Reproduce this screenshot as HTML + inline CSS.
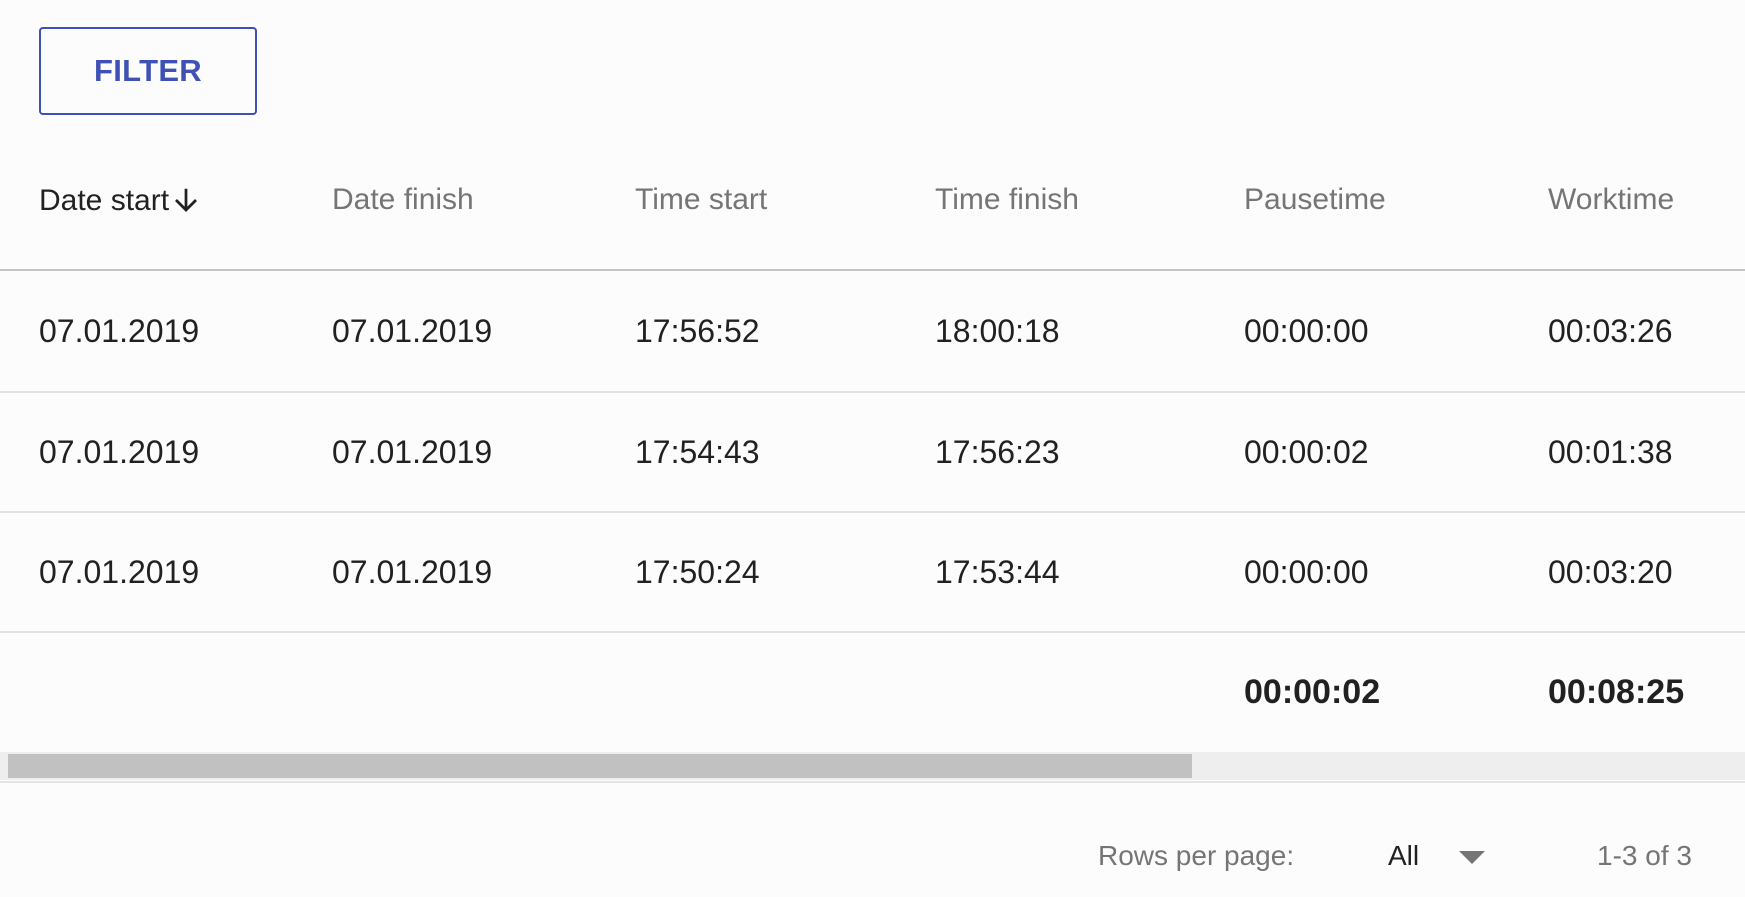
<!DOCTYPE html>
<html><head><meta charset="utf-8"><style>
body{margin:0;width:1745px;height:897px;background:#fcfcfc;font-family:"Liberation Sans",sans-serif;position:relative;overflow:hidden;color:#222}
.a{position:absolute;white-space:nowrap;line-height:1}
.btn{position:absolute;left:39px;top:27px;width:214px;height:84px;border:2px solid #3f51b5;border-radius:4px;color:#3f51b5;font-size:31px;font-weight:bold;display:flex;align-items:center;justify-content:center;letter-spacing:0.3px}
.h{font-size:30px;color:#757575;top:185px}
.line{position:absolute;left:0;width:1745px;height:2px;background:#e0e0e0}
.c{font-size:32px;color:#212121}
.b{font-size:34px;font-weight:bold;color:#212121}
</style></head><body>
<div class="btn">FILTER</div>
<div class="a h" style="left:39px;color:#212121">Date start<svg width="30" height="30" viewBox="0 0 24 24" style="vertical-align:-5px;margin-left:2px"><path d="M12 3v17M4 12l8 8 8-8" fill="none" stroke="#212121" stroke-width="2.2"/></svg></div>
<div class="a h" style="left:332px">Date finish</div>
<div class="a h" style="left:635px">Time start</div>
<div class="a h" style="left:935px">Time finish</div>
<div class="a h" style="left:1244px">Pausetime</div>
<div class="a h" style="left:1548px">Worktime</div>
<div class="line" style="top:269px;background:#c4c4c4"></div>

<div class="a c" style="left:39px;top:315px">07.01.2019</div>
<div class="a c" style="left:332px;top:315px">07.01.2019</div>
<div class="a c" style="left:635px;top:315px">17:56:52</div>
<div class="a c" style="left:935px;top:315px">18:00:18</div>
<div class="a c" style="left:1244px;top:315px">00:00:00</div>
<div class="a c" style="left:1548px;top:315px">00:03:26</div>
<div class="line" style="top:391px"></div>

<div class="a c" style="left:39px;top:436px">07.01.2019</div>
<div class="a c" style="left:332px;top:436px">07.01.2019</div>
<div class="a c" style="left:635px;top:436px">17:54:43</div>
<div class="a c" style="left:935px;top:436px">17:56:23</div>
<div class="a c" style="left:1244px;top:436px">00:00:02</div>
<div class="a c" style="left:1548px;top:436px">00:01:38</div>
<div class="line" style="top:511px"></div>

<div class="a c" style="left:39px;top:556px">07.01.2019</div>
<div class="a c" style="left:332px;top:556px">07.01.2019</div>
<div class="a c" style="left:635px;top:556px">17:50:24</div>
<div class="a c" style="left:935px;top:556px">17:53:44</div>
<div class="a c" style="left:1244px;top:556px">00:00:00</div>
<div class="a c" style="left:1548px;top:556px">00:03:20</div>
<div class="line" style="top:631px"></div>

<div class="a b" style="left:1244px;top:675px">00:00:02</div>
<div class="a b" style="left:1548px;top:675px">00:08:25</div>

<div style="position:absolute;left:0;top:752px;width:1745px;height:28px;background:#eeeeee"></div>
<div style="position:absolute;left:8px;top:754px;width:1184px;height:24px;background:#c1c1c1"></div>
<div class="line" style="top:781px;background:#e4e4e4"></div>

<div class="a" style="left:1098px;top:842px;font-size:28px;color:#757575">Rows per page:</div>
<div class="a" style="left:1388px;top:842px;font-size:28px;color:#212121">All</div>
<svg style="position:absolute;left:1459px;top:851px" width="26" height="14"><path d="M0 0h26L13 13z" fill="#757575"/></svg>
<div class="a" style="left:1597px;top:842px;font-size:28px;color:#757575">1-3 of 3</div>
</body></html>
